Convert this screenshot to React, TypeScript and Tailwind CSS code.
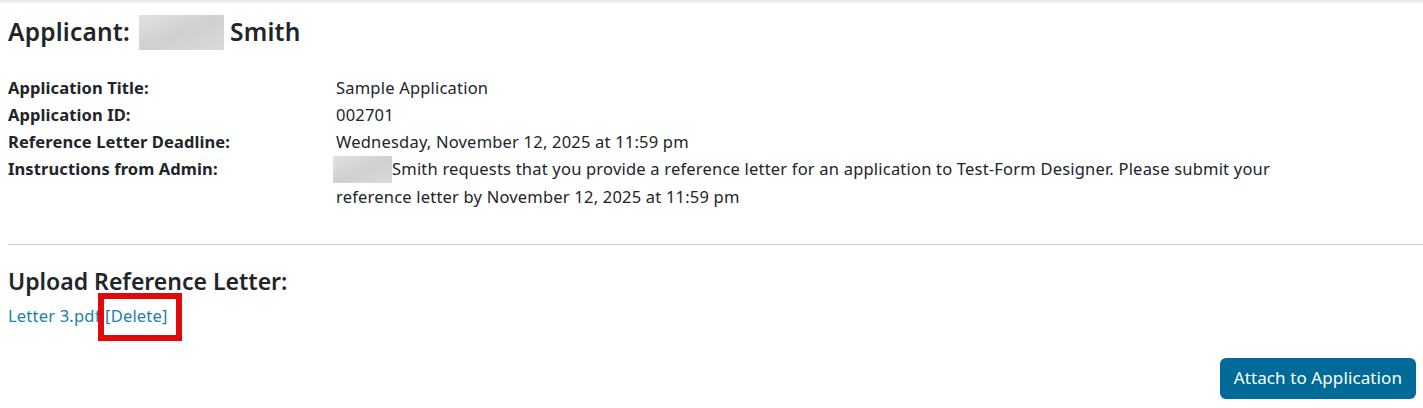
const font = { fontFamily: '"Noto Sans", "Open Sans", Arial, sans-serif' };

function Blur({ className }: { className: string }) {
  return (
    <span
      className={`inline-block bg-gradient-to-br from-[#e2e2e2] via-[#d0d0d0] to-[#dadada] align-middle ${className}`}
    />
  );
}

const rows: { label: string; value: React.ReactNode }[] = [
  { label: "Application Title:", value: "Sample Application" },
  { label: "Application ID:", value: "002701" },
  {
    label: "Reference Letter Deadline:",
    value: "Wednesday, November 12, 2025 at 11:59 pm",
  },
  {
    label: "Instructions from Admin:",
    value: (
      <>
        <Blur className="-ml-[3px] h-[27px] w-[59px] -mt-[3px]" />
        Smith requests that you provide a reference letter for an application
        to Test-Form Designer. Please submit your reference letter by November
        12, 2025 at 11:59 pm
      </>
    ),
  },
];

export default function App() {
  return (
    <div
      className="min-h-[408px] w-full bg-white text-[#212529]"
      style={font}
    >
      <div className="h-[4px] bg-gradient-to-b from-[#e4e4e4] to-white" />
      <div className="pl-2 pr-[7px]">
        <h3 className="mt-[10px] flex items-center text-[24.5px] font-semibold leading-[36px] tracking-[0.2px]">
          <span>Applicant:</span>
          <Blur className="ml-[9px] h-[35px] w-[85px]" />
          <span className="ml-[6px]">Smith</span>
        </h3>

        <div className="mt-[24px] text-[16.5px] leading-[27px] tracking-[0.2px]">
          {rows.map((r) => (
            <div key={r.label} className="flex">
              <div className="w-[328px] shrink-0 font-bold tracking-[0.1px]">
                {r.label}
              </div>
              <div className="max-w-[950px]">{r.value}</div>
            </div>
          ))}
        </div>

        <hr className="mt-[34px] -mr-[7px] border-t border-[#cccccc]" />

        <h3 className="mt-[19px] text-[23px] font-semibold leading-[34px]">
          Upload Reference Letter:
        </h3>

        <div className="mt-[4px] text-[16.5px] leading-[27px] tracking-[0.2px] text-[#1a81a8]">
          <span className="relative inline-block">
            <a href="#" className="text-[#1a81a8]">
              Letter 3.pdf
            </a>{" "}
            <a href="#" className="relative text-[#1a81a8]">
              [Delete]
              <span className="absolute -left-[7px] -right-[14px] -top-[11px] -bottom-[14px] border-[6px] border-[#e00a0a]" />
            </a>
          </span>
        </div>

        <div className="mt-[29px] flex justify-end">
          <button className="h-[41px] rounded-[6px] bg-[#006b99] px-[14px] text-[17px] tracking-[0.1px] text-white">
            Attach to Application
          </button>
        </div>
      </div>
    </div>
  );
}
